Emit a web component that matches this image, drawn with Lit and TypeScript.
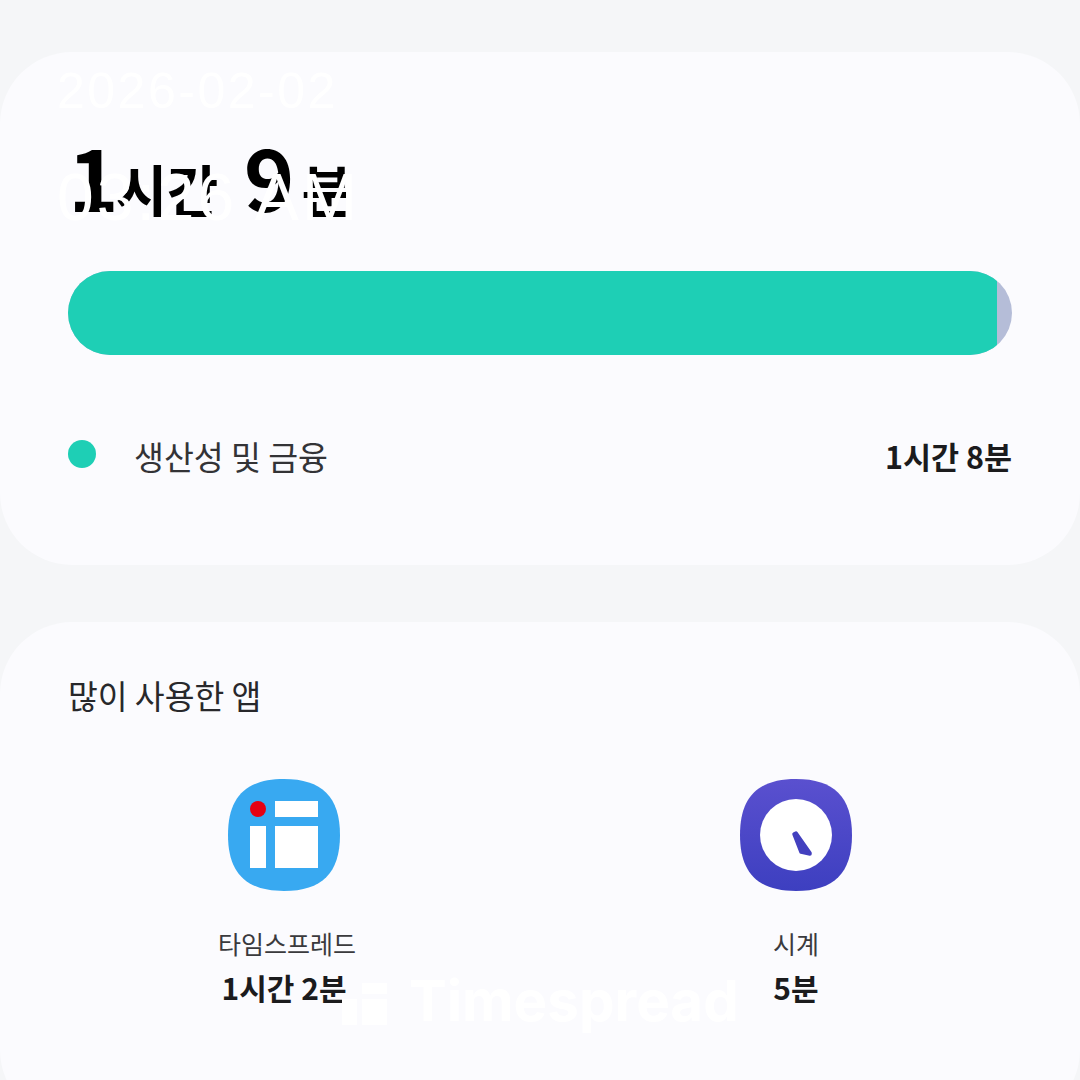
import { LitElement, html, css } from "lit";
import { customElement } from "lit/decorators.js";

@customElement("app-root")
export class AppRoot extends LitElement {
  static styles = css`
    :host {
      display: block;
      position: relative;
      width: 1080px;
      height: 1080px;
      overflow: hidden;
      background: #f5f6f8;
      font-family: "Noto Sans CJK KR", "Noto Sans", sans-serif;
      color: #1b1b1d;
    }
    .page {
      display: flex;
      flex-direction: column;
      gap: 57px;
      padding-top: 52px;
    }
    .card {
      background: #fbfbfe;
      border-radius: 72px;
      padding: 0 68px;
    }
    .summary {
      height: 513px;
      box-sizing: border-box;
      padding-top: 75px;
    }
    .total {
      display: flex;
      align-items: baseline;
      height: 144px;
      line-height: 96px;
      font-weight: 700;
      color: #000;
    }
    .total b { font-size: 86px; font-weight: 700; }
    .total span { font-size: 56px; margin-left: -3px; letter-spacing: -0.5px; }
    .total span.unit { margin-left: 7px; }
    .total .gap { width: 26px; }
    .bar {
      height: 84px;
      border-radius: 42px;
      background: #b5bdd8;
      overflow: hidden;
      width: 944px;
    }
    .bar div {
      height: 100%;
      width: 929px;
      background: #1ecfb5;
    }
    .legend {
      display: flex;
      align-items: center;
      margin-top: 77px;
      height: 48px;
      width: 944px;
    }
    .dot {
      width: 28px;
      height: 28px;
      border-radius: 50%;
      background: #1ecfb5;
      margin-right: 38px;
      margin-top: -4px;
    }
    .legend .name { font-size: 32.5px; flex: 1; color: #333336; margin-top: -2px; }
    .legend .val { font-size: 30.5px; font-weight: 700; color: #1b1b1d; margin-top: -1px; }
    .apps-card { height: 500px; box-sizing: border-box; padding-top: 50px; }
    .title { font-size: 32.4px; line-height: 46px; color: #28282b; }
    .apps {
      display: flex;
      margin-top: 61px;
      margin-left: -68px;
      margin-right: -68px;
    }
    .app {
      width: 512px;
      display: flex;
      flex-direction: column;
      align-items: center;
    }
    .app:first-child { margin-left: 28px; }
    .app:first-child .label { margin-left: 6px; }
    .app svg { display: block; }
    .label { font-size: 25px; line-height: 36px; margin-top: 34px; color: #3a3a3d; }
    .time { font-size: 30px; line-height: 44px; font-weight: 700; margin-top: 4px; color: #1b1b1d; }
    .wm {
      position: absolute;
      color: #fff;
      white-space: nowrap;
      font-family: "Liberation Sans", sans-serif;
    }
    .date { left: 57px; top: 63px; font-size: 50px; line-height: 56px; letter-spacing: 2.5px; }
    .clock { left: 57px; top: 164px; font-size: 66px; line-height: 66px; letter-spacing: 3px; }
    .brand {
      left: 342px;
      top: 968px;
      display: flex;
      align-items: center;
      gap: 22px;
      font-family: Inter, "Liberation Sans", sans-serif;
      font-size: 56.5px;
      line-height: 66px;
      font-weight: 700;
    }
    .brand svg { display: block; margin-top: 6px; }
  `;

  render() {
    const squircle =
      "M56 0C94 0 112 18 112 56C112 94 94 112 56 112C18 112 0 94 0 56C0 18 18 0 56 0Z";
    return html`
      <div class="page">
        <section class="card summary">
          <div class="total">
            <b>1</b><span>시간</span><i class="gap"></i><b>9</b><span class="unit">분</span>
          </div>
          <div class="bar"><div></div></div>
          <div class="legend">
            <i class="dot"></i>
            <span class="name">생산성 및 금융</span>
            <span class="val">1시간 8분</span>
          </div>
        </section>
        <section class="card apps-card">
          <div class="title">많이 사용한 앱</div>
          <div class="apps">
            <div class="app">
              <svg width="112" height="112" viewBox="0 0 112 112">
                <path d=${squircle} fill="#38a9f1" />
                <rect x="22" y="47" width="16" height="42" fill="#fff" />
                <rect x="47" y="22" width="43" height="16" fill="#fff" />
                <rect x="47" y="47" width="43" height="42" fill="#fff" />
                <circle cx="30" cy="30" r="8" fill="#e60012" />
              </svg>
              <div class="label">타임스프레드</div>
              <div class="time">1시간 2분</div>
            </div>
            <div class="app">
              <svg width="112" height="112" viewBox="0 0 112 112">
                <defs>
                  <linearGradient id="clk" x1="0" y1="0" x2="0" y2="1">
                    <stop offset="0" stop-color="#5a50cf" />
                    <stop offset="1" stop-color="#3d3fc0" />
                  </linearGradient>
                </defs>
                <path d=${squircle} fill="url(#clk)" />
                <circle cx="56" cy="56" r="36" fill="#fff" />
                <path d="M54 55L56 54L70 74L70 75L61 73Z" fill="#4340bf" stroke="#4340bf" stroke-width="3.5" stroke-linejoin="round" />
              </svg>
              <div class="label">시계</div>
              <div class="time">5분</div>
            </div>
          </div>
        </section>
      </div>
      <div class="wm date">2026-02-02</div>
      <div class="wm clock">03:26 AM</div>
      <div class="wm brand">
        <svg width="45" height="42" viewBox="0 0 45 42">
          <rect x="0" y="16" width="15" height="26" fill="#fff" />
          <rect x="20" y="0" width="25" height="11" fill="#fff" />
          <rect x="20" y="16" width="25" height="26" fill="#fff" />
        </svg>
        <span>Timespread</span>
      </div>
    `;
  }
}
